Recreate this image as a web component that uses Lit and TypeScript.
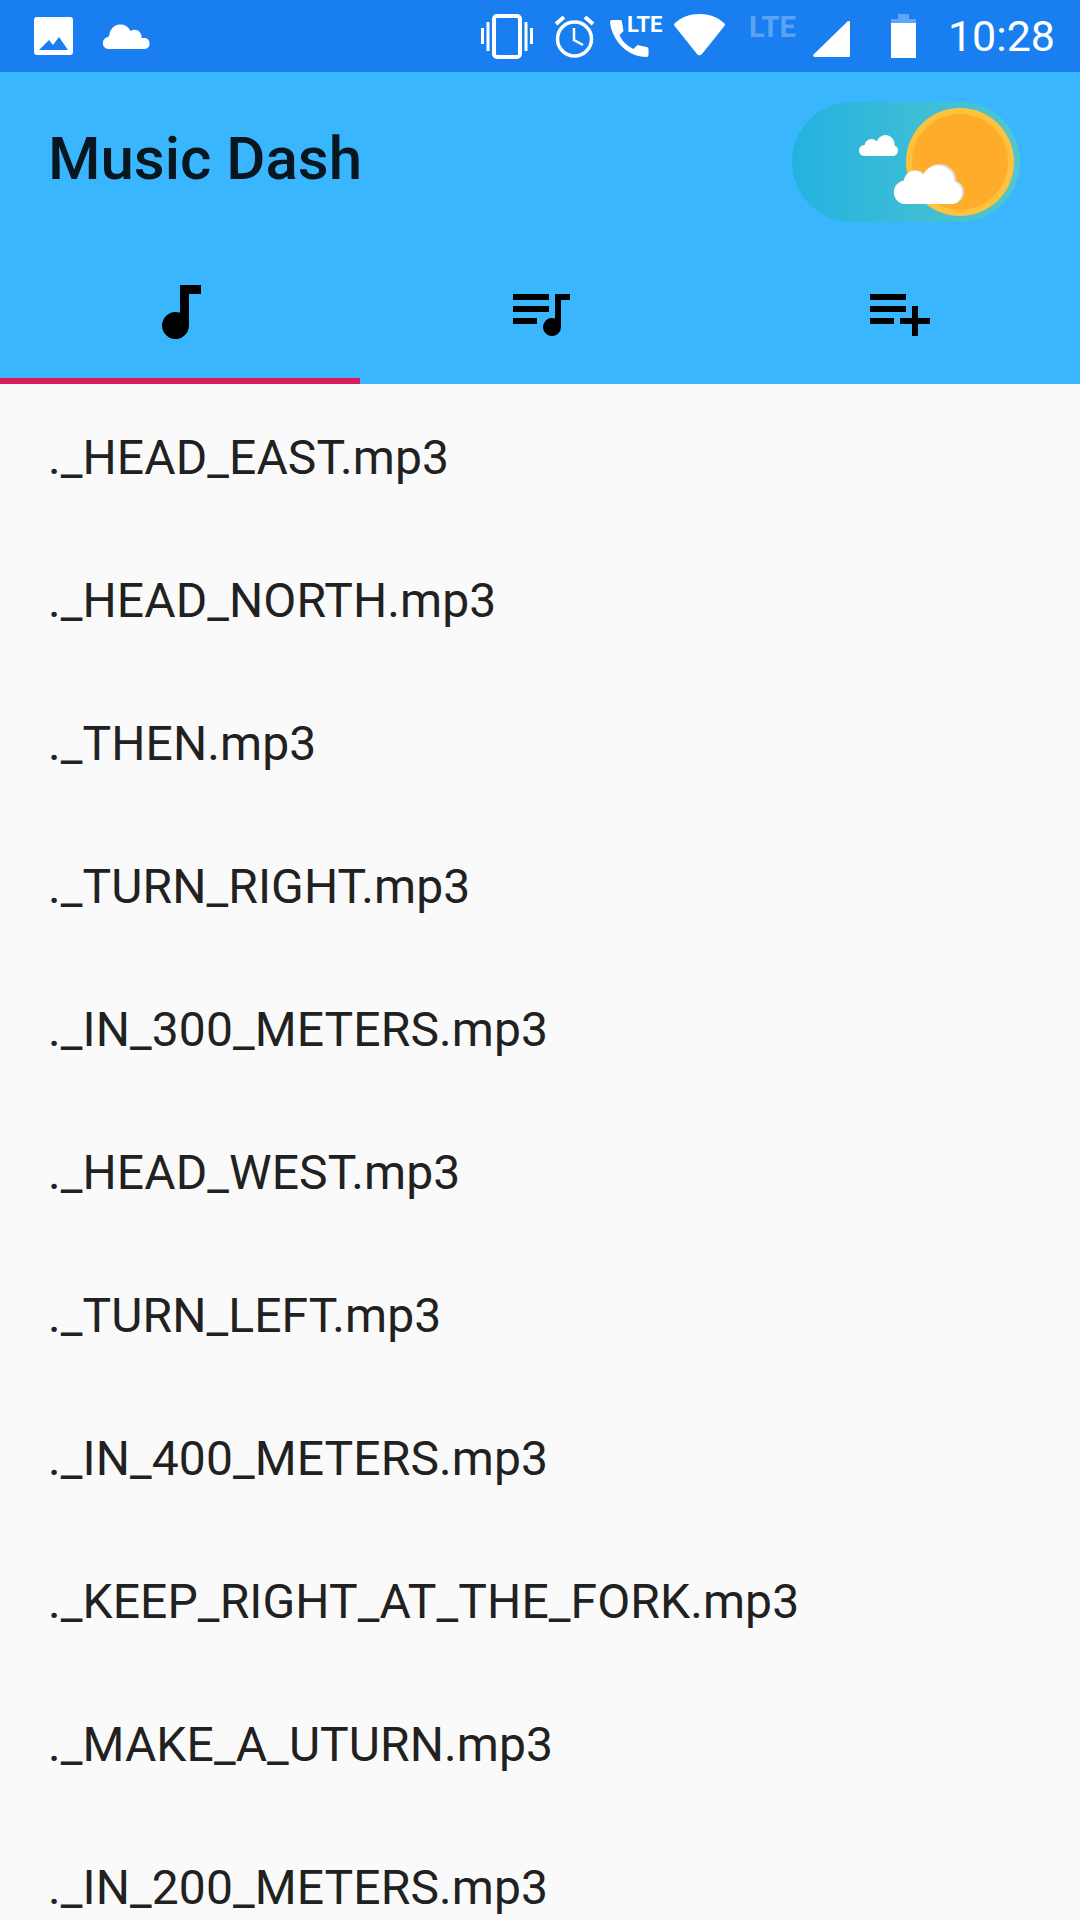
import { LitElement, html, css } from 'lit';
import { customElement } from 'lit/decorators.js';

const FILES = [
  '._HEAD_EAST.mp3',
  '._HEAD_NORTH.mp3',
  '._THEN.mp3',
  '._TURN_RIGHT.mp3',
  '._IN_300_METERS.mp3',
  '._HEAD_WEST.mp3',
  '._TURN_LEFT.mp3',
  '._IN_400_METERS.mp3',
  '._KEEP_RIGHT_AT_THE_FORK.mp3',
  '._MAKE_A_UTURN.mp3',
  '._IN_200_METERS.mp3',
];

@customElement('app-root')
export class AppRoot extends LitElement {
  static styles = css`
    :host {
      display: block;
      width: 1080px;
      height: 1920px;
      overflow: hidden;
      background: #fafafa;
      font-family: Roboto, sans-serif;
    }
    .status {
      height: 72px;
      background: #197ef0;
      display: flex;
      align-items: center;
      color: #fff;
    }
    .status svg {
      display: block;
      flex: none;
      overflow: visible;
    }
    .status-left {
      display: flex;
      align-items: center;
      gap: 30px;
      padding-left: 34px;
    }
    .status-right {
      margin-left: auto;
      display: flex;
      align-items: center;
      padding-right: 25px;
    }
    .alarm { margin-left: 21px; }
    .phone { margin-left: 15px; }
    .wifi { margin-left: 10px; }
    .lte { margin-left: 25px; }
    .signal { margin-left: 15px; }
    .battery { margin-left: 41px; }
    .time {
      font-size: 43px;
      margin-left: 32px;
      line-height: 72px;
      white-space: nowrap;
    }
    .appbar {
      background: #3ab6ff;
    }
    .toolbar {
      height: 170px;
      display: flex;
      align-items: center;
      justify-content: space-between;
      padding: 10px 60px 0 48px;
      box-sizing: border-box;
    }
    .title {
      font-size: 60px;
      font-weight: 500;
      color: #08161f;
      margin-bottom: 8px;
    }
    .toggle {
      width: 228px;
      height: 120px;
      display: block;
    }
    .tabs {
      display: grid;
      grid-template-columns: repeat(3, 360px);
    }
    .tab {
      display: flex;
      align-items: center;
      justify-content: center;
      padding-top: 4px;
      border-bottom: 6px solid transparent;
      box-sizing: border-box;
      height: 142px;
    }
    .tab svg {
      display: block;
    }
    .tab.active {
      border-bottom-color: #d81b60;
    }
    .note { margin-left: 3px; }
    .queue { margin: 6px 0 0 3px; }
    .add { margin-top: 6px; }
    .list {
      padding: 2px 0 0;
      margin: 0;
      list-style: none;
    }
    .list li {
      height: 143px;
      display: flex;
      align-items: center;
      padding-left: 48px;
      font-size: 48px;
      letter-spacing: 0.1px;
      color: #212121;
      white-space: nowrap;
    }
  `;

  render() {
    return html`
      <div class="status">
        <div class="status-left">
          <svg width="39" height="38" viewBox="0 0 39 38" fill="#fff">
            <path fill-rule="evenodd" d="M3 0h33a3 3 0 0 1 3 3v32a3 3 0 0 1-3 3H3a3 3 0 0 1-3-3V3a3 3 0 0 1 3-3zM5 33h29L25 20l-6 8-4-5z" />
          </svg>
          <svg width="47" height="26" viewBox="0 0 47 26" fill="#fff">
            <path d="M6 26a6 6 0 0 1-.500-12c0-1 .500-2 1-2a9 9 0 0 1 0-1 11 11 0 0 1 21-3 7 7 0 0 1 11 5c0 1 0 1.500 0 2h3a5 5 0 0 1 5 5 5 5 0 0 1-5 6z" />
          </svg>
        </div>
        <div class="status-right">
          <svg width="52" height="44" viewBox="0 0 52 44" fill="none" stroke="#fff" stroke-width="3">
            <rect x="13" y="2" width="26" height="41" rx="3" stroke-width="4" />
            <path d="M7 8v29M45 8v29M1.500 14v16M50.500 14v16" />
          </svg>
          <svg class="alarm" width="41" height="44" viewBox="0 0 41 44" fill="none" stroke="#fff">
            <circle cx="20.500" cy="25" r="17" stroke-width="3.500" />
            <path d="M20 14v12l9 5" stroke-width="2.500" />
            <path d="M2 10l8-7M39 10l-8-7" stroke-width="4" />
          </svg>
          <svg class="phone" width="54" height="44" viewBox="0 0 54 44" fill="#fff">
            <path d="M2 6h8a2 2 0 0 1 2 2l1.500 9-4 4c3 7 8 11 14 14l4-4 9 2a2 2 0 0 1 2 2v6a2 2 0 0 1-2 2C18 43 2 27 0 8a2 2 0 0 1 2-2z" />
            <text x="17" y="18" font-family="Roboto" font-weight="700" font-size="22">LTE</text>
          </svg>
          <svg class="wifi" width="51" height="44" viewBox="0 0 51 44" fill="#fff">
            <path d="M25.500 0c9.500 0 18 3 24.500 9a2 2 0 0 1 .400 3L28 40a3 3 0 0 1-5 0L.600 12A2 2 0 0 1 1 9C7.500 3 16 0 25.500 0z" />
          </svg>
          <svg class="lte" width="48" height="44" viewBox="0 0 48 44" fill="#fff">
            <text x="-1" y="23" fill-opacity=".3" font-family="Roboto" font-weight="700" font-size="29">LTE</text>
          </svg>
          <svg class="signal" width="37" height="44" viewBox="0 0 37 44" fill="#fff">
            <path d="M35 7a1.500 1.500 0 0 1 2 1.500v33a1.500 1.500 0 0 1-1.500 1.500H2c-1.500 0-2.500-1.500-1.500-2.500z" />
          </svg>
          <svg class="battery" width="25" height="44" viewBox="0 0 25 44" fill="#fff">
            <path fill-opacity=".3" d="M7 0h11v5h7v4H0V5h7z" />
            <path d="M0 9h25v35H0z" />
          </svg>
          <span class="time">10:28</span>
        </div>
      </div>
      <div class="appbar">
        <div class="toolbar">
          <div class="title">Music Dash</div>
          <svg class="toggle" viewBox="0 0 228 120">
            <defs>
              <linearGradient id="track" x1="0" x2="1" y1="0" y2="0">
                <stop offset="0" stop-color="#23b2e1" />
                <stop offset="1" stop-color="#52c6cd" />
              </linearGradient>
            </defs>
            <rect width="228" height="120" rx="60" fill="url(#track)" />
            <circle cx="168" cy="60" r="54" fill="#ffc23e" />
            <circle cx="168" cy="60" r="48" fill="#ffac2a" />
            <g fill="#fff">
              <rect x="67" y="43" width="39" height="11" rx="5.500" />
              <circle cx="79.500" cy="44" r="7" />
              <circle cx="93.500" cy="42" r="9" />
            </g>
            <g fill="#dfdada">
              <rect x="102" y="78" width="70" height="24" rx="12" />
              <circle cx="123.700" cy="79" r="11" />
              <circle cx="147.700" cy="78.500" r="16.500" />
            </g>
            <g fill="#fff">
              <rect x="102" y="79" width="68" height="23" rx="11.500" />
              <circle cx="122.700" cy="80" r="11" />
              <circle cx="146" cy="80" r="16.500" />
            </g>
          </svg>
        </div>
        <div class="tabs">
          <div class="tab active">
            <svg class="note" width="39" height="54" viewBox="0 0 39 54">
              <path d="M18 0h21v9H27v31.500a13.500 13.500 0 1 1-9-12.700z" />
            </svg>
          </div>
          <div class="tab">
            <svg class="queue" width="57" height="42" viewBox="0 0 57 42">
              <path d="M0 0h36v6H0zM0 12h36v6H0zM0 24h24v6H0zM42 0h15v6H48v27a9 9 0 1 1-6-8.500z" />
            </svg>
          </div>
          <div class="tab">
            <svg class="add" width="60" height="42" viewBox="0 0 60 42">
              <path d="M0 0h36v6H0zM0 12h36v6H0zM0 24h24v6H0zM42 12h6v12h12v6H48v12h-6V30H30v-6h12z" />
            </svg>
          </div>
        </div>
      </div>
      <ul class="list">
        ${FILES.map((f) => html`<li>${f}</li>`)}
      </ul>
    `;
  }
}
